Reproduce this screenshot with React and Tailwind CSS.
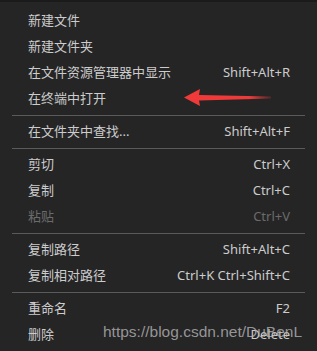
import React from 'react';

const items = [
  { label: '新建文件' },
  { label: '新建文件夹' },
  { label: '在文件资源管理器中显示', key: 'Shift+Alt+R' },
  { label: '在终端中打开' },
  'sep',
  { label: '在文件夹中查找...', key: 'Shift+Alt+F' },
  'sep',
  { label: '剪切', key: 'Ctrl+X' },
  { label: '复制', key: 'Ctrl+C' },
  { label: '粘贴', key: 'Ctrl+V', disabled: true },
  'sep',
  { label: '复制路径', key: 'Shift+Alt+C' },
  { label: '复制相对路径', key: 'Ctrl+K Ctrl+Shift+C' },
  'sep',
  { label: '重命名', key: 'F2' },
  { label: '删除', key: 'Delete' },
];

const Arrow = () => (
  <svg className="absolute left-[183px] top-[88px]" width="92" height="20" viewBox="0 0 92 20">
    <defs>
      <linearGradient id="fade" x1="0" x2="1" y1="0" y2="0">
        <stop offset="0" stopColor="#f03a3a" />
        <stop offset="0.75" stopColor="#f03a3a" />
        <stop offset="1" stopColor="#f03a3a" stopOpacity="0.2" />
      </linearGradient>
    </defs>
    <path d="M1 9.5 L17 1 L16 7 L88 8.5 L88 10.5 L16 12.5 L17 18 Z" fill="url(#fade)" />
  </svg>
);

export default function App() {
  return (
    <div
      className="relative w-[317px] h-[351px] overflow-hidden bg-[#252526] text-[13px] text-[#cccccc]"
      style={{ fontFamily: '"Noto Sans", "Noto Sans CJK SC", sans-serif' }}
    >
      <div className="h-[2px] bg-[#1b1b1c]" />
      <div className="pt-[6px]">
        {items.map((it, i) =>
          it === 'sep' ? (
            <div key={i} className="py-[3px] px-3">
              <div className="h-px bg-[#5a5a5a]" />
            </div>
          ) : (
            <div
              key={i}
              className={`flex items-center justify-between h-[26px] pl-[28px] pr-[27px] ${
                it.disabled ? 'text-[#6b6b6b]' : ''
              }`}
            >
              <span>{it.label}</span>
              {it.key && <span>{it.key}</span>}
            </div>
          )
        )}
      </div>
      <Arrow />
      <div
        className="absolute left-[103px] top-[319px] text-[15.5px] leading-[26px] text-[#b4b4b4]/80"
        style={{ fontFamily: '"Liberation Sans", Arial, sans-serif' }}
      >
        https://blog.csdn.net/DuBenL
      </div>
    </div>
  );
}
